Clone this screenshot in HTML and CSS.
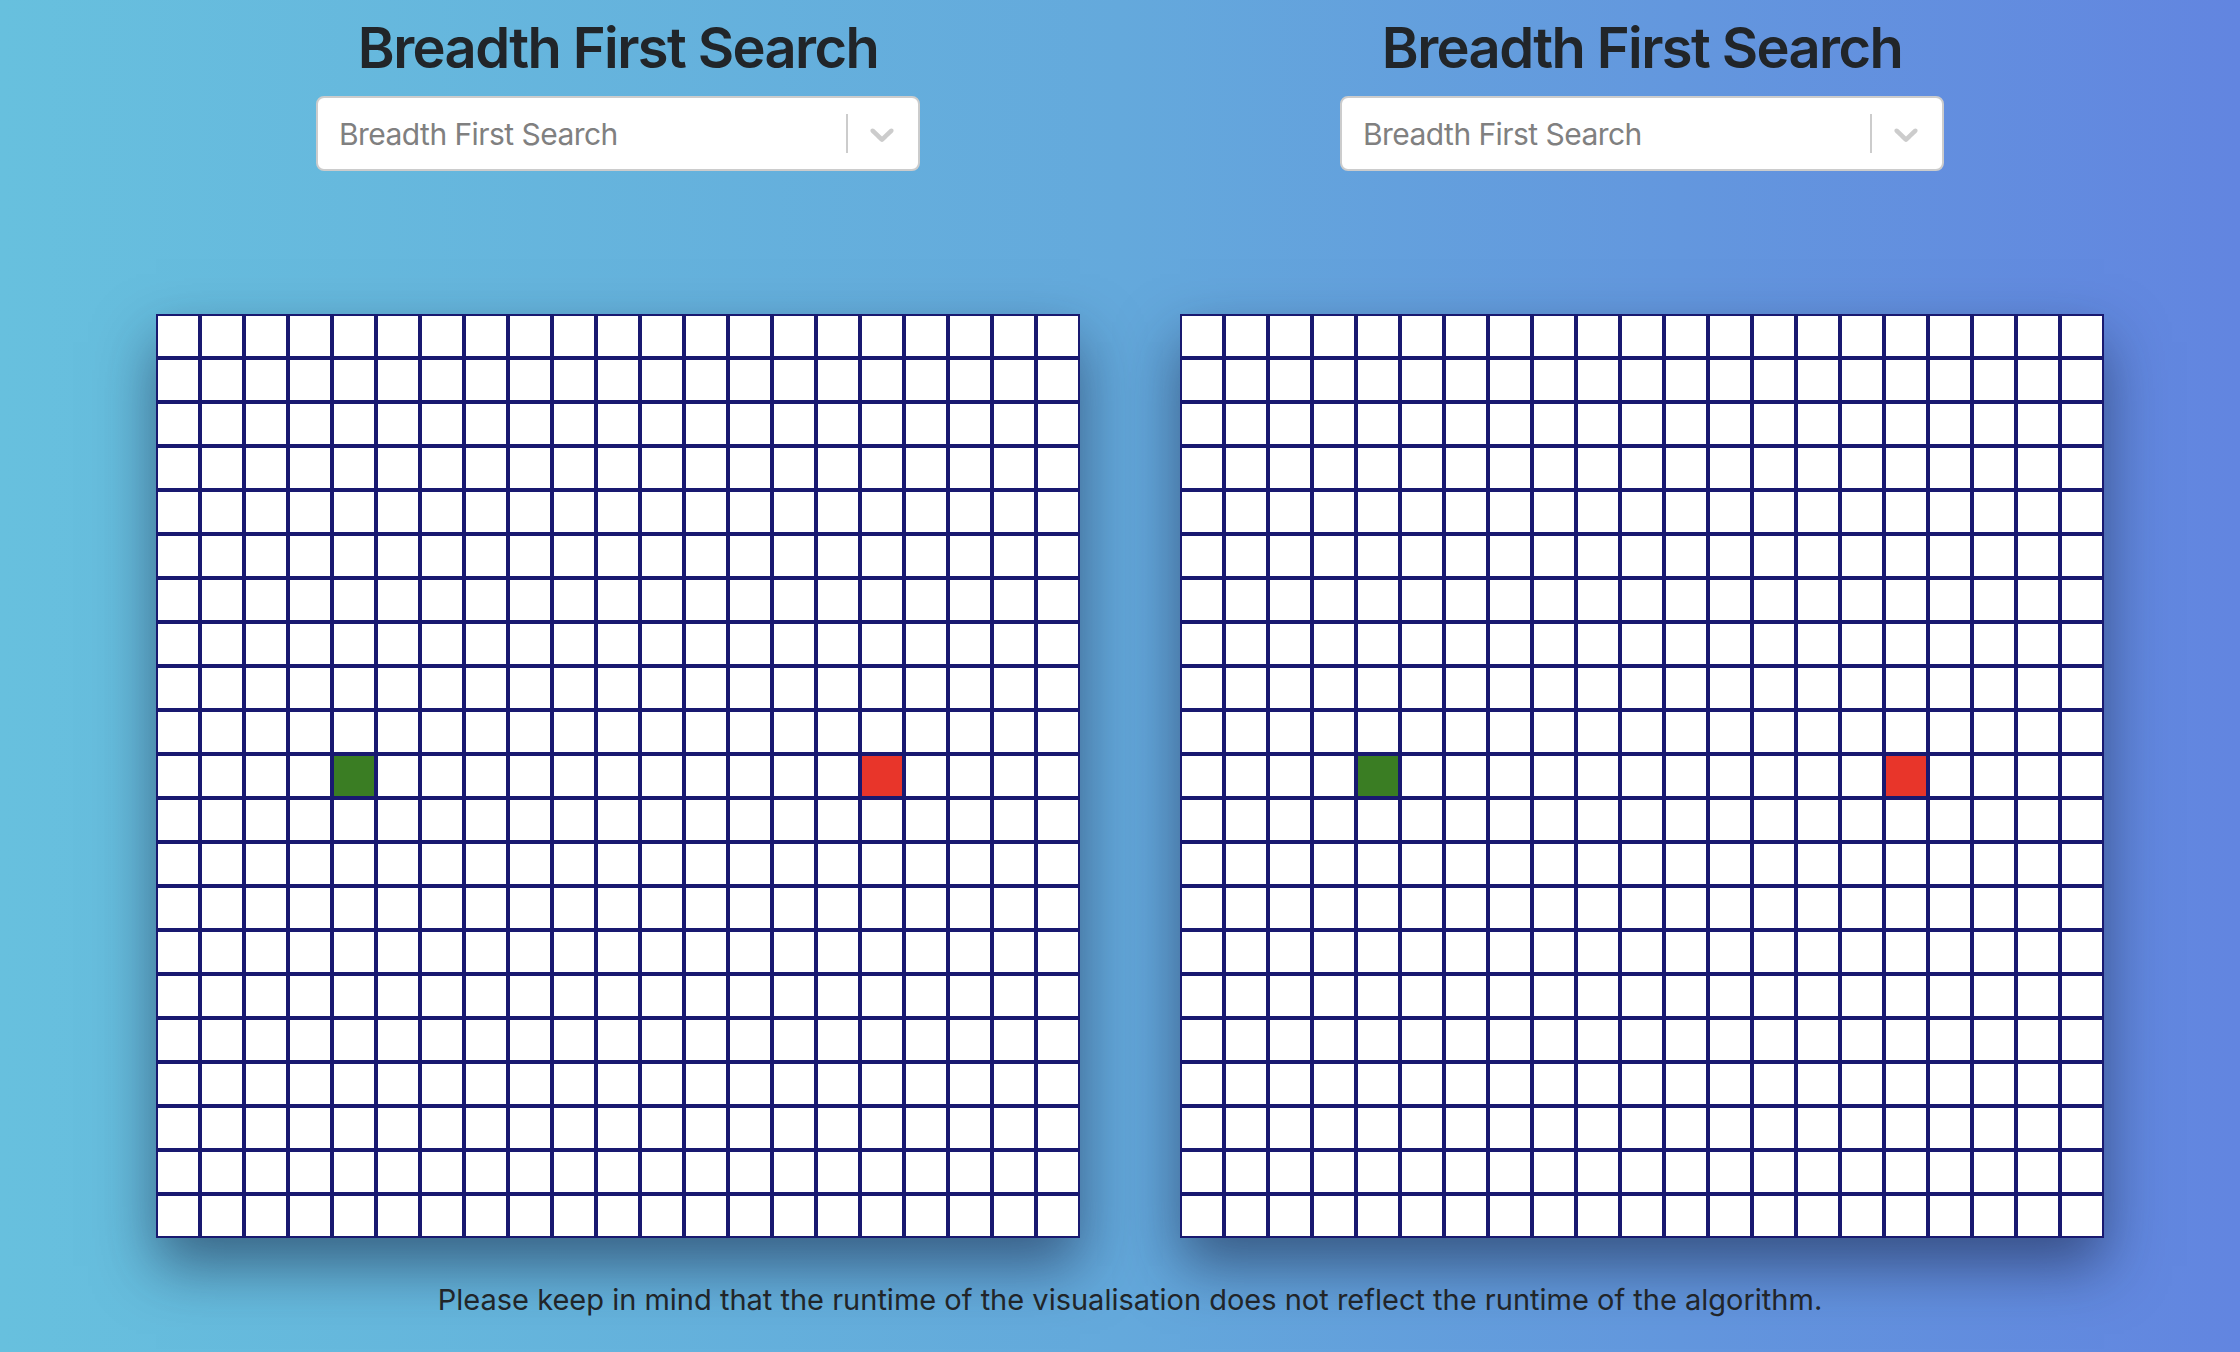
FILE: index.html
```html
<!DOCTYPE html>
<html lang="en">
<head>
<meta charset="utf-8">
<title>Pathfinding Visualiser</title>
<link rel="stylesheet" href="styles.css">
</head>
<body>
<div class="page">
  <div class="columns">
    <section class="column">
      <h1 class="title">Breadth First Search</h1>
      <div class="select">
        <div class="select-value">Breadth First Search</div>
        <div class="select-indicators">
          <span class="select-separator"></span>
          <span class="select-chevron">
            <svg viewBox="0 0 20 20" width="40" height="40" aria-hidden="true"><path d="M4.516 7.548c0.436-0.446 1.043-0.481 1.576 0l3.908 3.747 3.908-3.747c0.533-0.481 1.141-0.446 1.574 0 0.436 0.445 0.408 1.197 0 1.615-0.406 0.418-4.695 4.502-4.695 4.502-0.217 0.223-0.502 0.335-0.787 0.335s-0.57-0.112-0.789-0.335c0 0-4.287-4.084-4.695-4.502s-0.436-1.17 0-1.615z"></path></svg>
          </span>
        </div>
      </div>
      <div class="board" data-start="10,4" data-end="10,16"></div>
    </section>
    <section class="column">
      <h1 class="title">Breadth First Search</h1>
      <div class="select">
        <div class="select-value">Breadth First Search</div>
        <div class="select-indicators">
          <span class="select-separator"></span>
          <span class="select-chevron">
            <svg viewBox="0 0 20 20" width="40" height="40" aria-hidden="true"><path d="M4.516 7.548c0.436-0.446 1.043-0.481 1.576 0l3.908 3.747 3.908-3.747c0.533-0.481 1.141-0.446 1.574 0 0.436 0.445 0.408 1.197 0 1.615-0.406 0.418-4.695 4.502-4.695 4.502-0.217 0.223-0.502 0.335-0.787 0.335s-0.57-0.112-0.789-0.335c0 0-4.287-4.084-4.695-4.502s-0.436-1.17 0-1.615z"></path></svg>
          </span>
        </div>
      </div>
      <div class="board" data-start="10,4" data-end="10,16"></div>
    </section>
  </div>
  <p class="note">Please keep in mind that the runtime of the visualisation does not reflect the runtime of the algorithm.</p>
</div>
<script src="script.js"></script>
</body>
</html>
```
FILE: styles.css
```css
html, body {
  margin: 0;
  padding: 0;
}

body {
  width: 2240px;
  height: 1352px;
  overflow: hidden;
  background: linear-gradient(to right, #67c0de 0%, #64a9dc 50%, #6285e0 100%);
  font-family: Inter, "Noto Sans", "Liberation Sans", sans-serif;
  color: #212529;
}

.page {
  width: 2048px;
  margin-left: 106px;
  display: flex;
  flex-direction: column;
  align-items: center;
}

.columns {
  display: flex;
  width: 100%;
}

.column {
  width: 1024px;
  display: flex;
  flex-direction: column;
  align-items: center;
}

.title {
  margin: 14px 0 0;
  font-size: 56px;
  font-weight: 600;
  line-height: 68px;
  letter-spacing: -1.6px;
  color: #212529;
}

.select {
  box-sizing: border-box;
  margin-top: 14px;
  width: 604px;
  height: 75px;
  background: #fff;
  border: 2px solid #cccccc;
  border-radius: 8px;
  display: flex;
  align-items: center;
}

.select-value {
  flex: 1;
  padding-left: 21px;
  font-size: 30px;
  color: #808080;
  letter-spacing: -0.55px;
}

.select-indicators {
  display: flex;
  align-items: center;
  align-self: stretch;
}

.select-separator {
  width: 2px;
  height: 39px;
  background: #cccccc;
}

.select-chevron {
  display: flex;
  padding: 0 16px 0 14px;
}

.select-chevron svg {
  fill: #cccccc;
}

.board {
  margin-top: 143px;
  display: grid;
  grid-template-columns: repeat(21, 44px);
  grid-auto-rows: 44px;
  background: #fff;
  box-shadow: 0 28px 56px rgba(20, 30, 60, 0.55);
}

.cell {
  box-sizing: border-box;
  border: 2px solid #191970;
  background: #fff;
}

.cell-start {
  background: #3a7d23;
}

.cell-end {
  background: #e8352a;
}

.note {
  margin: 42px 0 0;
  font-size: 29px;
  line-height: 40px;
  color: #212529;
}
```
FILE: script.js
```js
document.querySelectorAll('.board').forEach(function (board) {
  var start = board.dataset.start.split(',').map(Number);
  var end = board.dataset.end.split(',').map(Number);
  var frag = document.createDocumentFragment();
  for (var r = 0; r < 21; r++) {
    for (var c = 0; c < 21; c++) {
      var cell = document.createElement('div');
      cell.className = 'cell';
      if (r === start[0] && c === start[1]) cell.className += ' cell-start';
      if (r === end[0] && c === end[1]) cell.className += ' cell-end';
      frag.appendChild(cell);
    }
  }
  board.appendChild(frag);
});
```
